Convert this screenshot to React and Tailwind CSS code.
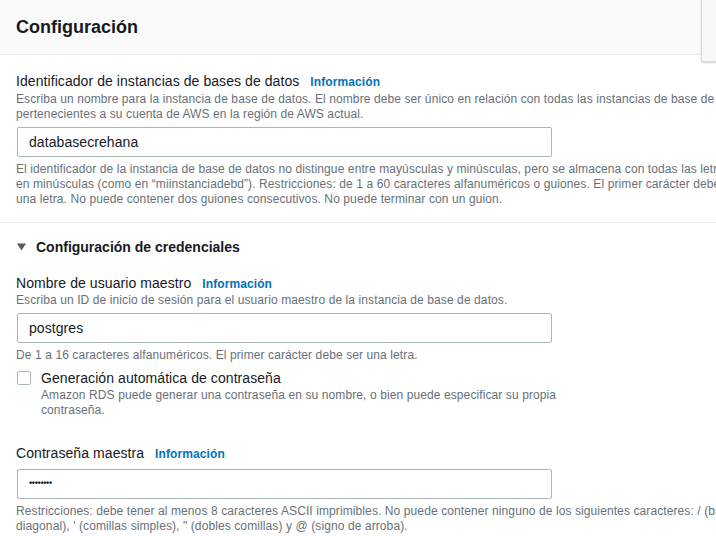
import React from "react";

const font = { fontFamily: '"Liberation Sans", Arial, sans-serif' };

function Info() {
  return (
    <span className="ml-[11px] text-[12px] font-bold tracking-[0.1px] text-[#0073bb]">Información</span>
  );
}

function Label({ children }) {
  return (
    <div className="h-[20px] text-[14px] leading-[20px] tracking-[0.07px] text-[#16191f] whitespace-nowrap">
      {children}
      <Info />
    </div>
  );
}

function Desc({ children, className = "" }) {
  return (
    <div className={"text-[12px] leading-[15px] tracking-[0.1px] text-[#687078] whitespace-nowrap " + className}>
      {children}
    </div>
  );
}

function Input({ value, className = "" }) {
  return (
    <div
      className={
        "ml-px flex h-[30px] w-[535px] items-center rounded-[2px] border border-[#aab7b8] bg-white pl-[11px] text-[14px] tracking-[0.07px] text-[#16191f] " +
        className
      }
    >
      {value}
    </div>
  );
}

export default function App() {
  return (
    <div className="relative h-[536px] w-[716px] overflow-hidden bg-white" style={font}>
      <div className="flex h-[55px] items-center border-b border-[#eaeded] bg-[#fafafa] px-4">
        <h2 className="text-[18px] font-bold text-[#16191f]">Configuración</h2>
      </div>

      <div className="absolute right-0 top-0 h-[62px] w-[15px] rounded-bl-[3px] border-b border-l border-[#d5dbdb] bg-[#f8f8f8] shadow-[0_1px_2px_rgba(0,0,0,0.2)]" />

      <div className="px-4 pt-4">
        <Label>Identificador de instancias de bases de datos</Label>
        <Desc className="mt-px">
          Escriba un nombre para la instancia de base de datos. El nombre debe ser único en relación con todas las instancias de base de datos
          <br />
          pertenecientes a su cuenta de AWS en la región de AWS actual.
        </Desc>
        <Input value="databasecrehana" className="mt-[5px]" />
        <Desc className="mt-[5px]">
          El identificador de la instancia de base de datos no distingue entre mayúsculas y minúsculas, pero se almacena con todas las letras
          <br />
          en minúsculas (como en “miinstanciadebd”). Restricciones: de 1 a 60 caracteres alfanuméricos o guiones. El primer carácter debe ser
          <br />
          una letra. No puede contener dos guiones consecutivos. No puede terminar con un guion.
        </Desc>
      </div>

      <div className="mt-[15px] border-t border-[#eaeded]" />

      <div className="px-4 pt-[14px]">
        <div className="flex h-[20px] items-center text-[14px] font-bold text-[#16191f]">
          <svg width="9" height="8" viewBox="0 0 9 8" className="ml-px mr-[10px]">
            <path d="M0 0.5 L9 0.5 L4.5 7.5 Z" fill="#545b64" />
          </svg>
          Configuración de credenciales
        </div>

        <div className="mt-4">
          <Label>Nombre de usuario maestro</Label>
        </div>
        <Desc>Escriba un ID de inicio de sesión para el usuario maestro de la instancia de base de datos.</Desc>
        <Input value="postgres" className="mt-[5px]" />
        <Desc className="mt-[5px]">De 1 a 16 caracteres alfanuméricos. El primer carácter debe ser una letra.</Desc>

        <div className="mt-[5px] flex">
          <div className="ml-px mt-[3px] h-[14px] w-[14px] rounded-[2px] border border-[#aab7b8] bg-white" />
          <div className="ml-[10px]">
            <div className="h-[20px] text-[14px] leading-[20px] tracking-[0.07px] text-[#16191f]">Generación automática de contraseña</div>
            <Desc>
              Amazon RDS puede generar una contraseña en su nombre, o bien puede especificar su propia
              <br />
              contraseña.
            </Desc>
          </div>
        </div>

        <div className="mt-[25px]">
          <Label>Contraseña maestra</Label>
        </div>
        <Input value={<span className="text-[9px] font-bold tracking-[-0.3px]">••••••••</span>} className="mt-[6px]" />
        <Desc className="mt-[5px]">
          Restricciones: debe tener al menos 8 caracteres ASCII imprimibles. No puede contener ninguno de los siguientes caracteres: / (barra
          <br />
          diagonal), ' (comillas simples), " (dobles comillas) y @ (signo de arroba).
        </Desc>
      </div>
    </div>
  );
}
